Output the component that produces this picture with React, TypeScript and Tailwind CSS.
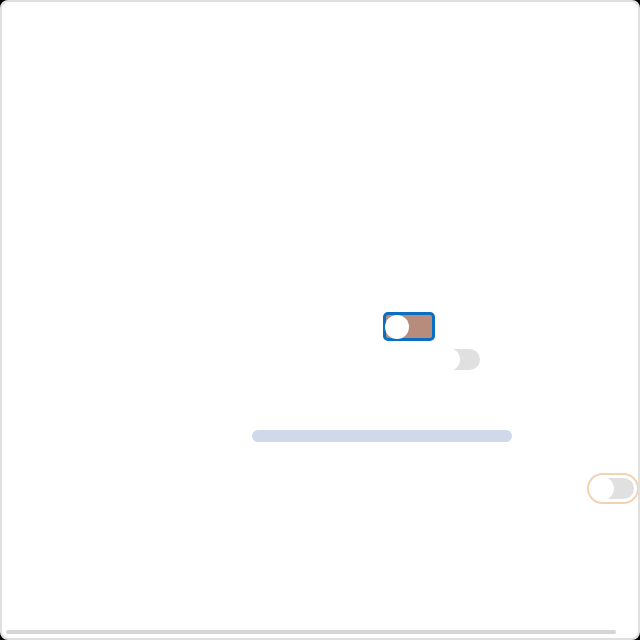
import { ReactElement } from "react";

const Knob = (): ReactElement => (
  <span className="-ml-px block shrink-0 w-[23px] h-[23px] rounded-full bg-white" />
);

const App = (): ReactElement => {
  return (
    <div className="w-[640px] h-[640px] bg-black font-['Liberation_Sans',sans-serif]">
      <div className="relative flex flex-col h-full w-full rounded-[8px] border-2 border-[#e0e0e0] bg-white overflow-hidden">
        {/* focused, checked-looking switch */}
        <button className="mt-[310px] ml-[381px] flex items-center w-[52px] h-[29px] box-border border-[3px] border-[#0a6fc2] rounded-[5px] bg-[#b88c7c] p-0">
          <span className="-ml-px block w-[24px] h-[24px] rounded-full bg-white" />
        </button>

        {/* plain switch */}
        <div className="mt-[8px] ml-[436px] flex items-center w-[42px] h-[21px] rounded-full bg-[#e0e0e0]">
          <Knob />
        </div>

        {/* slider track */}
        <div className="mt-[60px] ml-[250px] w-[260px] h-[12px] rounded-full bg-[#cfd9ea]" />

        {/* switch with focus ring */}
        <div className="mt-[31px] ml-[585px] shrink-0 w-[52px] h-[31px] box-border border-2 border-[#f3d2b4] rounded-full px-[3px] py-[3px] flex items-center">
          <div className="flex items-center w-[42px] h-[21px] shrink-0 rounded-full bg-[#e0e0e0]">
            <Knob />
          </div>
        </div>

        {/* bottom scrollbar */}
        <div className="mt-auto mb-[4px] ml-[4px] w-[610px] h-[4px] rounded-full bg-[#d6d6d6]" />
      </div>
    </div>
  );
};

export default App;
